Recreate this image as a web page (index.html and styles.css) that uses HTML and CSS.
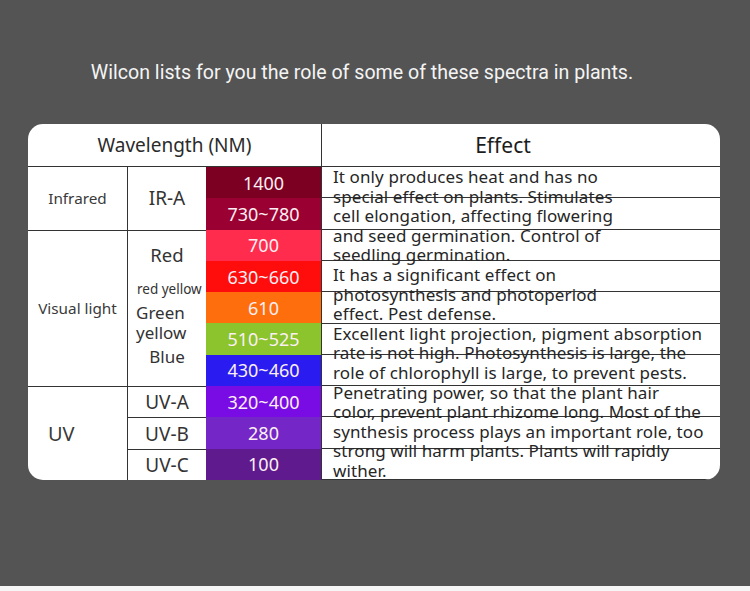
FILE: index.html
```html
<!DOCTYPE html>
<html lang="en">
<head>
<meta charset="utf-8">
<title>Spectra in plants</title>
<link rel="stylesheet" href="styles.css">
</head>
<body>
<div class="page">
  <h1 class="title">Wilcon lists for you the role of some of these spectra in plants.</h1>
  <div class="card">
    <div class="head-wl">Wavelength (NM)</div>
    <div class="head-effect">Effect</div>

    <div class="c1 g-ir">Infrared</div>
    <div class="c2 g-ir big">IR-A</div>

    <div class="c1 g-vis sep">Visual light</div>
    <div class="c2 g-vis sep vis">
      <span class="v-red">Red</span>
      <span class="v-ry">red yellow</span>
      <span class="v-green">Green</span>
      <span class="v-yellow">yellow</span>
      <span class="v-blue">Blue</span>
    </div>

    <div class="c1 g-uv sep uv">UV</div>
    <div class="c2 r8 sep big">UV-A</div>
    <div class="c2 r9 sep big">UV-B</div>
    <div class="c2 r10 sep big">UV-C</div>

    <div class="sw r1 s-1400">1400</div>
    <div class="sw r2 s-730">730~780</div>
    <div class="sw r3 s-700">700</div>
    <div class="sw r4 s-630">630~660</div>
    <div class="sw r5 s-610">610</div>
    <div class="sw r6 s-510">510~525</div>
    <div class="sw r7 s-430">430~460</div>
    <div class="sw r8 s-320">320~400</div>
    <div class="sw r9 s-280">280</div>
    <div class="sw r10 s-100">100</div>

    <div class="effect">
      <span>It only produces heat and has no</span>
      <span>special effect on plants. Stimulates</span>
      <span>cell elongation, affecting flowering</span>
      <span>and seed germination. Control of</span>
      <span>seedling germination.</span>
      <span>It has a significant effect on</span>
      <span>photosynthesis and photoperiod</span>
      <span>effect. Pest defense.</span>
      <span>Excellent light projection, pigment absorption</span>
      <span>rate is not high. Photosynthesis is large, the</span>
      <span>role of chlorophyll is large, to prevent pests.</span>
      <span>Penetrating power, so that the plant hair</span>
      <span>color, prevent plant rhizome long. Most of the</span>
      <span>synthesis process plays an important role, too</span>
      <span>strong will harm plants. Plants will rapidly</span>
      <span>wither.</span>
    </div>
  </div>
</div>
</body>
</html>
```

FILE: styles.css
```css
* { box-sizing: border-box; }
html { background: #f6f6f6; }
body {
  margin: 0;
  font-family: "Noto Sans", "Open Sans", sans-serif;
}
.page {
  height: 586px;
  background: #545454;
  padding-top: 58px;
}
.title {
  margin: 0;
  padding-right: 26px;
  height: 30px;
  line-height: 30px;
  text-align: center;
  font-family: Roboto, "Noto Sans", sans-serif;
  font-weight: 400;
  font-size: 19.6px;
  color: #f4f4f4;
}
.card {
  margin: 36px 0 0 28px;
  width: 692px;
  height: 356px;
  background: #fff;
  border-radius: 15px;
  overflow: hidden;
  display: grid;
  grid-template-columns: 100px 78px 115px 1fr;
  grid-template-rows: 43px repeat(10, 31.3px);
  color: #2b2b2b;
}
.head-wl {
  grid-column: 1 / 4;
  grid-row: 1;
  border-bottom: 1px solid #333;
  display: flex;
  align-items: center;
  justify-content: center;
  font-size: 19px;
}
.head-effect {
  grid-column: 4;
  grid-row: 1;
  border-bottom: 1px solid #333;
  border-left: 1px solid #333;
  display: flex;
  align-items: center;
  justify-content: center;
  padding-right: 36px;
  font-size: 21px;
  color: #1c1c1c;
}
.c1 {
  grid-column: 1;
  border-right: 1px solid #333;
  display: flex;
  align-items: center;
  justify-content: center;
  font-size: 15.3px;
  color: #3a3a3a;
}
.c2 {
  grid-column: 2;
  display: flex;
  align-items: center;
  justify-content: center;
  font-size: 17px;
  color: #333;
}
.big { font-size: 19px; }
.sep { border-top: 1px solid #333; }
.g-ir { grid-row: 2 / 4; }
.g-vis { grid-row: 4 / 9; }
.g-uv { grid-row: 9 / 12; }
.uv {
  justify-content: flex-start;
  padding-left: 20px;
  font-size: 20px;
}
.r1 { grid-row: 2; }
.r2 { grid-row: 3; }
.r3 { grid-row: 4; }
.r4 { grid-row: 5; }
.r5 { grid-row: 6; }
.r6 { grid-row: 7; }
.r7 { grid-row: 8; }
.r8 { grid-row: 9; }
.r9 { grid-row: 10; }
.r10 { grid-row: 11; }

.vis {
  flex-direction: column;
  align-items: stretch;
  justify-content: flex-start;
}
.vis span { display: block; line-height: 20px; }
.v-red { margin-top: 11px; line-height: 26px !important; text-align: center; font-size: 18.5px; }
.v-ry { margin-top: 11px; padding-left: 9px; font-size: 13.5px; white-space: nowrap; }
.v-green { margin-top: 4px; padding-left: 8px; }
.v-yellow { padding-left: 8px; }
.v-blue { margin-top: 4px; text-align: center; }

.sw {
  grid-column: 3;
  display: flex;
  align-items: center;
  justify-content: center;
  font-size: 18px;
  color: #fbeff3;
}
.s-1400 { background: #7c0022; }
.s-730 { background: #9b0032; }
.s-700 { background: #ff2c4e; }
.s-630 { background: #ff0d0d; }
.s-610 { background: #ff6e0c; }
.s-510 { background: #8bc42c; }
.s-430 { background: #2a1cf0; }
.s-320 { background: #790ce4; }
.s-280 { background: #7427c6; }
.s-100 { background: #5f1a8d; }

.effect {
  grid-column: 4;
  grid-row: 2 / 12;
  border-left: 1px solid #333;
  padding-left: 11px;
  background: repeating-linear-gradient(to bottom, transparent 0, transparent 30.3px, #333 30.3px, #333 31.3px);
  font-size: 17px;
  letter-spacing: 0.1px;
  line-height: 19.6px;
  color: #262626;
  white-space: nowrap;
}
.effect span { display: block; }
```
